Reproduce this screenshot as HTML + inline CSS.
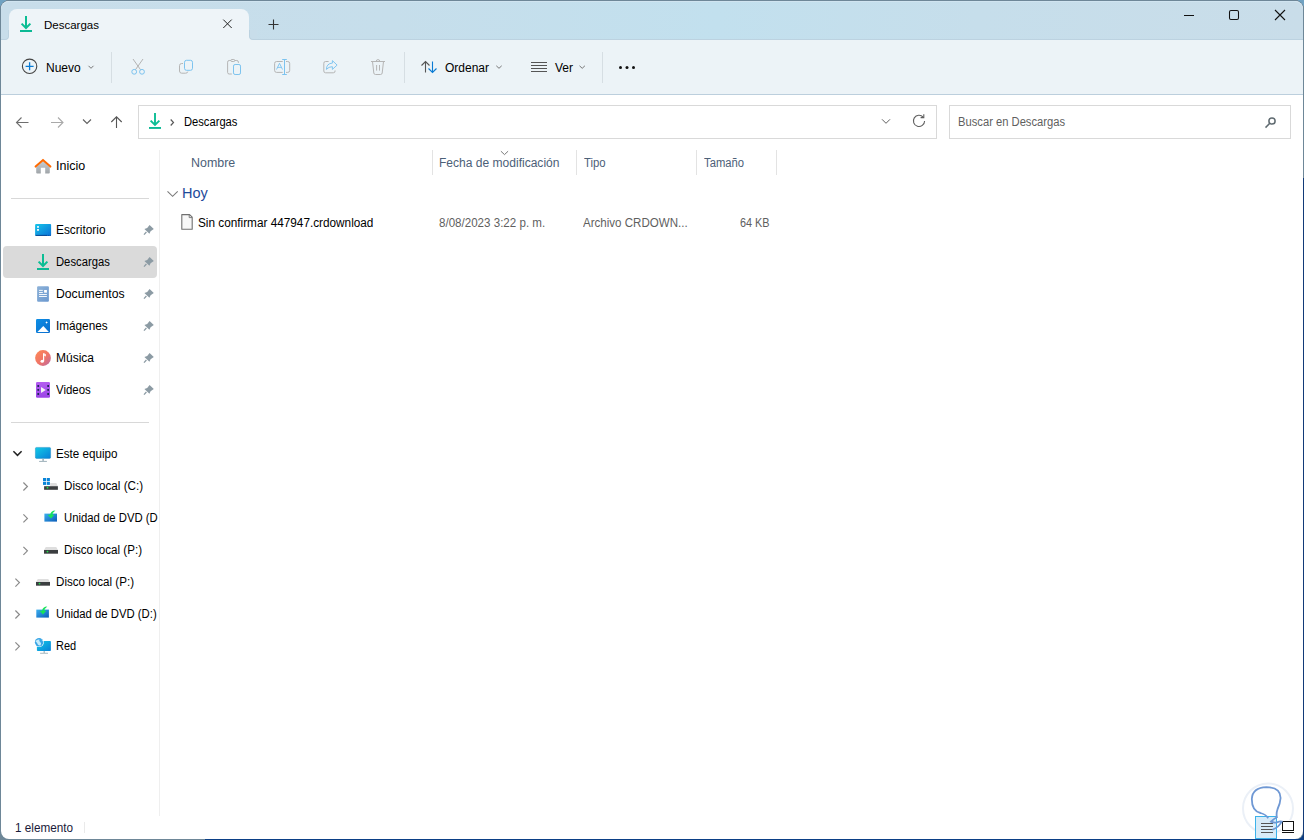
<!DOCTYPE html>
<html><head><meta charset="utf-8">
<style>
html,body{margin:0;padding:0;width:1304px;height:840px;overflow:hidden;background:#6E8798;}
body{position:relative;font-family:"Liberation Sans",sans-serif;color:#000;}
div{position:absolute;box-sizing:border-box;}
.edgeR{left:1303px;top:178px;width:1px;height:662px;background:#123a78;}
.edgeB{left:205px;top:839px;width:1099px;height:1px;background:#0b3f86;}
.win{left:1px;top:1px;width:1302px;height:838px;border-radius:8px;background:#fff;}
.tabbar{left:1px;top:1px;width:1302px;height:39px;background:linear-gradient(90deg,#c8ddea 0%,#c6deeb 30%,#c2e0ee 55%,#c6deeb 75%,#c9dde9 100%);border-radius:8px 8px 0 0;border-top:1px solid #d0e4f0;border-bottom:1px solid #bcd2e0;}
.tab{left:9px;top:9px;width:240px;height:31px;background:#eef4f8;border-radius:8px 8px 0 0;}
.notchL{left:1px;top:30px;width:8px;height:10px;background:#eef4f8;}
.notchL div{left:0;top:0;width:8px;height:10px;background:#c8ddea;border-radius:0 0 4px 0;border-right:1px solid #bcd2e0;border-bottom:1px solid #bcd2e0;}
.notchR{left:249px;top:30px;width:8px;height:10px;background:#eef4f8;}
.notchR div{left:0;top:0;width:8px;height:10px;background:#c8ddea;border-radius:0 0 0 4px;border-left:1px solid #bcd2e0;border-bottom:1px solid #bcd2e0;}
.cornerTL{left:0;top:0;width:6px;height:6px;background:#70a2c2;}
.cornerTR{left:1298px;top:0;width:6px;height:6px;background:#70a2c2;}
.cornerBR{left:1296px;top:832px;width:8px;height:8px;background:#0b3f86;}
.toolbar{left:1px;top:40px;width:1302px;height:54px;background:#ecf3f7;}
.tbline{left:1px;top:94px;width:1302px;height:1px;background:#bccfdd;}
.t{white-space:nowrap;font-size:12px;line-height:16px;}
.sep{width:1px;background:#d6dee3;}
.box{border:1px solid #d9d9d9;background:#fff;}
.navsel{left:3px;top:246px;width:154px;height:32px;background:#dadada;border-radius:4px;}
.hr{height:1px;background:#d8d8d8;}
.hdr{color:#4c6078;}
.n{font-size:12.5px;transform-origin:0 0;}
.gray{color:#5f5f5f;}
svg.ov{position:absolute;left:0;top:0;}
</style></head><body>
<div class="cornerTL"></div><div class="cornerTR"></div><div class="cornerBR"></div>
<div style="left:0;top:0;width:1304px;height:840px;border-radius:9px;background:#6E8798;"></div><div class="edgeR"></div><div class="edgeB"></div>
<div class="win"></div>
<div class="tabbar"></div>
<div class="tab"></div><div class="notchL"><div></div></div><div class="notchR"><div></div></div>
<div class="toolbar"></div>
<div class="tbline"></div>

<!-- tab text -->
<div class="t" style="left:44px;top:17px;font-size:11.5px;">Descargas</div>

<!-- toolbar text -->
<div class="t" style="left:46px;top:60px;">Nuevo</div>
<div class="sep" style="left:111px;top:52px;height:31px;"></div>
<div class="sep" style="left:404px;top:52px;height:31px;"></div>
<div class="t" style="left:445px;top:60px;">Ordenar</div>
<div class="t" style="left:555px;top:60px;">Ver</div>
<div class="sep" style="left:602px;top:52px;height:31px;"></div>

<!-- address -->
<div class="box" style="left:138px;top:105px;width:799px;height:34px;"></div>
<div class="t n" style="left:184px;top:114px;transform:scaleX(0.894);">Descargas</div>
<div class="box" style="left:949px;top:105px;width:342px;height:34px;"></div>
<div class="t n gray" style="left:958px;top:114px;transform:scaleX(0.896);">Buscar en Descargas</div>

<!-- nav pane -->
<div class="navsel"></div>
<div class="hr" style="left:11px;top:198px;width:138px;"></div>
<div class="hr" style="left:11px;top:422px;width:138px;"></div>
<div style="left:159px;top:150px;width:1px;height:666px;background:#efefef;"></div>
<div class="t n" style="left:56px;top:158px;transform:scaleX(1.0);">Inicio</div>
<div class="t n" style="left:56px;top:222px;transform:scaleX(0.95);">Escritorio</div>
<div class="t n" style="left:56px;top:254px;transform:scaleX(0.9);">Descargas</div>
<div class="t n" style="left:56px;top:286px;transform:scaleX(0.977);">Documentos</div>
<div class="t n" style="left:56px;top:318px;transform:scaleX(0.94);">Imágenes</div>
<div class="t n" style="left:56px;top:350px;transform:scaleX(0.96);">Música</div>
<div class="t n" style="left:56px;top:382px;transform:scaleX(0.915);">Videos</div>
<div class="t n" style="left:56px;top:446px;transform:scaleX(0.93);">Este equipo</div>
<div style="left:0;top:470px;width:158px;height:160px;overflow:hidden;">
<div class="t n" style="left:64px;top:8px;transform:scaleX(0.933);">Disco local (C:)</div>
<div class="t n" style="left:64px;top:40px;transform:scaleX(0.906);">Unidad de DVD (D:)</div>
<div class="t n" style="left:64px;top:72px;transform:scaleX(0.928);">Disco local (P:)</div>
<div class="t n" style="left:56px;top:104px;transform:scaleX(0.928);">Disco local (P:)</div>
<div class="t n" style="left:56px;top:136px;transform:scaleX(0.906);">Unidad de DVD (D:)</div>
</div>
<div class="t n" style="left:56px;top:638px;transform:scaleX(0.88);">Red</div>

<!-- headers -->
<div class="t n hdr" style="left:191px;top:155px;transform:scaleX(0.995);">Nombre</div>
<div class="sep" style="left:432px;top:150px;height:25px;background:#e3e3e3;"></div>
<div class="t n hdr" style="left:439px;top:155px;transform:scaleX(0.963);">Fecha de modificación</div>
<div class="sep" style="left:576px;top:150px;height:25px;background:#e3e3e3;"></div>
<div class="t n hdr" style="left:584px;top:155px;transform:scaleX(0.908);">Tipo</div>
<div class="sep" style="left:696px;top:150px;height:25px;background:#e3e3e3;"></div>
<div class="t n hdr" style="left:704px;top:155px;transform:scaleX(0.9);">Tamaño</div>
<div class="sep" style="left:776px;top:150px;height:25px;background:#e3e3e3;"></div>

<div class="t" style="left:182px;top:184px;font-size:14.5px;line-height:18px;color:#1e4a9a;">Hoy</div>
<div class="t n" style="left:198px;top:215px;transform:scaleX(0.942);">Sin confirmar 447947.crdownload</div>
<div class="t n gray" style="left:439px;top:215px;transform:scaleX(0.926);">8/08/2023 3:22 p. m.</div>
<div class="t n gray" style="left:583px;top:215px;transform:scaleX(0.925);">Archivo CRDOWN...</div>
<div class="t n gray" style="left:740px;top:215px;transform:scaleX(0.87);">64 KB</div>

<!-- status -->
<div class="t n" style="left:15px;top:820px;transform:scaleX(0.94);color:#1a1a3a;">1 elemento</div>
<div style="left:84px;top:822px;width:1px;height:11px;background:#eaeaea;"></div>

<svg class="ov" width="1304" height="840" viewBox="0 0 1304 840">
<defs>
<linearGradient id="teal" gradientUnits="userSpaceOnUse" x1="0" y1="0" x2="0" y2="1"><stop offset="0" stop-color="#0dbf93"/><stop offset="1" stop-color="#0dbf93"/></linearGradient>
</defs>
<!-- tab icon -->
<g fill="none" stroke="#0bbd94" stroke-width="2">
<path d="M26 16V28"/><path d="M21.6 23.6L26 28L30.4 23.6"/>
</g>
<rect x="20" y="30" width="12" height="2" fill="#0cb995"/>
<!-- tab close -->
<path d="M223.3 19.6L231.7 28M231.7 19.6L223.3 28" stroke="#222" stroke-width="1" fill="none"/>
<!-- new tab plus -->
<path d="M273.5 19.5V29.5M268.5 24.5H278.5" stroke="#333" stroke-width="1.1" fill="none"/>
<!-- window controls -->
<path d="M1184 15.5H1194" stroke="#111" stroke-width="1"/>
<rect x="1229.5" y="10.5" width="9" height="9" rx="1.5" fill="none" stroke="#111" stroke-width="1.05"/>
<path d="M1275 10L1285 20M1285 10L1275 20" stroke="#111" stroke-width="1.1"/>

<!-- TOOLBAR -->
<!-- nuevo circle plus -->
<circle cx="29.6" cy="66.3" r="7.2" fill="none" stroke="#444" stroke-width="1.1"/>
<path d="M29.6 62.3V70.3M25.6 66.3H33.6" stroke="#0a7bd4" stroke-width="1.3"/>
<path d="M88.5 65.8L91 68.3L93.5 65.8" fill="none" stroke="#777" stroke-width="1"/>
<!-- cut -->
<path d="M133 59L140.6 69.8M143 59L135.4 69.8" stroke="#b3b3b3" stroke-width="1" fill="none"/>
<circle cx="134.2" cy="71.8" r="2.4" fill="none" stroke="#7cc3ef" stroke-width="1"/>
<circle cx="142" cy="71.8" r="2.4" fill="none" stroke="#7cc3ef" stroke-width="1"/>
<!-- copy -->
<path d="M183 63.5H181.7Q179.5 63.5 179.5 65.7V71Q179.5 73.2 181.7 73.2H185.5Q187.6 73.2 187.8 71.6" fill="none" stroke="#b5b5b5" stroke-width="1"/>
<rect x="184.5" y="60.3" width="8" height="10" rx="2" fill="none" stroke="#7cc3ef" stroke-width="1"/>
<!-- paste -->
<path d="M231.8 74H229.2Q227.6 74 227.6 72.4V62.2Q227.6 60.5 229.2 60.5H236.8Q238.4 60.5 238.4 62.2V63" fill="none" stroke="#b5b5b5" stroke-width="1"/>
<rect x="230.8" y="59.5" width="4" height="2" rx="1" fill="#ecf3f7" stroke="#b5b5b5" stroke-width="1"/>
<rect x="233.5" y="64.5" width="7" height="10" rx="1.6" fill="none" stroke="#7cc3ef" stroke-width="1"/>
<!-- rename -->
<path d="M282.7 61.5H276.6Q274.6 61.5 274.6 63.5V70.4Q274.6 72.4 276.6 72.4H282.7M286 61.5H287.7Q289.7 61.5 289.7 63.5V70.4Q289.7 72.4 287.7 72.4H286" fill="none" stroke="#b5b5b5" stroke-width="1"/>
<path d="M276.5 69.5L279.5 63.3L282.5 69.5M277.5 67.4H281.5" fill="none" stroke="#7cc3ef" stroke-width="0.9"/>
<path d="M284.5 59.5V74.5M282.2 59.5H286.8M282.2 74.5H286.8" fill="none" stroke="#7cc3ef" stroke-width="1"/>
<!-- share -->
<path d="M328.6 61.5H325.6Q323.8 61.5 323.8 63.3V71Q323.8 72.8 325.6 72.8H333.3Q335.1 72.8 335.1 71V70.5" fill="none" stroke="#b5b5b5" stroke-width="1"/>
<path d="M326.4 69.4Q326.6 63.4 332.4 63.1V60.6L337.1 65.1L332.4 69.4V66.7Q328.8 66.6 326.4 69.4Z" fill="none" stroke="#7cc3ef" stroke-width="0.95" stroke-linejoin="round"/>
<!-- delete -->
<path d="M371 61.5H385M376.2 61.5Q376.2 59.6 378 59.6Q379.8 59.6 379.8 61.5M372.5 61.5L373.8 73Q374 74.5 375.5 74.5H380.5Q382 74.5 382.2 73L383.5 61.5M376.6 65V70.6M379.5 65V70.6" fill="none" stroke="#b5b5b5" stroke-width="1"/>
<!-- ordenar -->
<path d="M425.5 61.5V72.5M421.5 65.5L425.5 61.5L429.5 65.5" fill="none" stroke="#555" stroke-width="1.1"/>
<path d="M432.5 61.5V72.5M428.5 68.5L432.5 72.5L436.5 68.5" fill="none" stroke="#0a7bd4" stroke-width="1.1"/>
<path d="M496.3 65.8L499 68.3L501.7 65.8" fill="none" stroke="#777" stroke-width="1"/>
<!-- ver -->
<path d="M531 62.5H547M531 65.5H547M531 68.5H547M531 71.5H547" stroke="#555" stroke-width="1"/>
<path d="M579.5 65.8L582.2 68.3L584.9 65.8" fill="none" stroke="#777" stroke-width="1"/>
<!-- more -->
<circle cx="620.5" cy="67.5" r="1.5" fill="#111"/>
<circle cx="627" cy="67.5" r="1.5" fill="#111"/>
<circle cx="633.5" cy="67.5" r="1.5" fill="#111"/>

<!-- ADDRESS ROW -->
<path d="M28.5 122.5H16.5M21.5 117.5L16.5 122.5L21.5 127.5" fill="none" stroke="#6e6e6e" stroke-width="1.1"/>
<path d="M51 122.5H63M58 117.5L63 122.5L58 127.5" fill="none" stroke="#a9a9a9" stroke-width="1.1"/>
<path d="M83 119.5L87 123.5L91 119.5" fill="none" stroke="#606060" stroke-width="1.1"/>
<path d="M116.5 128V116.8M111.3 122L116.5 116.8L121.7 122" fill="none" stroke="#555" stroke-width="1.1"/>
<g fill="none" stroke="#0bbd94" stroke-width="1.9">
<path d="M155 113V125"/><path d="M150.6 120.6L155 125L159.4 120.6"/>
</g>
<rect x="149" y="127" width="12" height="1.9" fill="#0cb995"/>
<path d="M170.7 119.5L173.5 122.5L170.7 125.5" fill="none" stroke="#5a5a5a" stroke-width="1.2"/>
<path d="M882 119.3L886 123.3L890 119.3" fill="none" stroke="#606060" stroke-width="1"/>
<path d="M923.2 117.2A5.6 5.6 0 1 0 924.6 121" fill="none" stroke="#5f5f5f" stroke-width="1.1"/>
<path d="M920.6 117.6H923.8V114.2" fill="none" stroke="#5f5f5f" stroke-width="1.1"/>
<circle cx="1272" cy="121" r="3.1" fill="none" stroke="#5f6a70" stroke-width="1.5"/>
<path d="M1269.8 123.3L1265.5 127.6" stroke="#5f6a70" stroke-width="1.5"/>

<!-- NAV ICONS -->
<defs>
<linearGradient id="gHouse" x1="0" y1="0" x2="0" y2="1"><stop offset="0" stop-color="#c9ced2"/><stop offset="1" stop-color="#9fa4a8"/></linearGradient>
<linearGradient id="gDesk" x1="0" y1="0" x2="1" y2="1"><stop offset="0" stop-color="#17c6ea"/><stop offset="1" stop-color="#0a6fd6"/></linearGradient>
<linearGradient id="gDoc" x1="0" y1="0" x2="1" y2="1"><stop offset="0" stop-color="#8db2d8"/><stop offset="1" stop-color="#6b98cf"/></linearGradient>
<linearGradient id="gImg" x1="0" y1="0" x2="1" y2="1"><stop offset="0" stop-color="#0d8fe6"/><stop offset="1" stop-color="#0a6ccc"/></linearGradient>
<linearGradient id="gMus" x1="0" y1="0" x2="1" y2="1"><stop offset="0" stop-color="#ff8a55"/><stop offset="0.55" stop-color="#ef7468"/><stop offset="1" stop-color="#b86aa8"/></linearGradient>
<linearGradient id="gVid" x1="0" y1="0" x2="0" y2="1"><stop offset="0" stop-color="#b45df0"/><stop offset="1" stop-color="#9b45e6"/></linearGradient>
<linearGradient id="gMon" x1="0" y1="0" x2="1" y2="1"><stop offset="0" stop-color="#12cbe6"/><stop offset="1" stop-color="#0a80d8"/></linearGradient>
<linearGradient id="gDvd" x1="0" y1="0" x2="1" y2="1"><stop offset="0" stop-color="#3cb0f0"/><stop offset="1" stop-color="#0a5cb8"/></linearGradient>
<g id="pin"><path d="M149.6 225L153.8 229L150.6 231.2L149.4 233.8L144.4 229L147.2 228Z" fill="#8c9ba4"/><path d="M146.4 232L144 234.6" stroke="#8c9ba4" stroke-width="1.3"/></g>
<g id="drv"><path d="M1.8 0H12.2L14 3H0Z" fill="#dedede"/><rect x="0" y="3" width="14" height="4" fill="#3b3e40"/><rect x="0" y="6.2" width="14" height="0.8" fill="#8a8a8a"/><circle cx="3.5" cy="4.6" r="0.9" fill="#22e04a"/></g>
<g id="dvd"><rect x="0" y="3.2" width="12.6" height="8" fill="url(#gDvd)"/><path d="M11 0Q6.2 0.2 5.8 4.4H3.2L6.6 8.2L10 4.4H8Q8.4 1.8 11 0Z" fill="#16e35a"/></g>
<g id="chev"><path d="M0 0L4 4L0 8" fill="none" stroke="#8a8a8a" stroke-width="1.2"/></g>
</defs>
<!-- home -->
<path d="M36.2 167V172.6Q36.2 173.6 37.2 173.6H40.8V167.8H45.2V173.6H48.8Q49.8 173.6 49.8 172.6V167L43 160.8Z" fill="url(#gHouse)"/>
<path d="M35.6 166.6L43 160L50.4 166.6" fill="none" stroke="#ff6a00" stroke-width="2" stroke-linecap="round"/>
<!-- desktop -->
<rect x="35.1" y="224" width="16" height="12" rx="1" fill="url(#gDesk)"/>
<rect x="37" y="226.2" width="2" height="1.5" fill="#fff"/>
<rect x="37" y="229.1" width="2" height="1.6" fill="#fff"/>
<path d="M35.6 235.4H47.3M48.2 235.4H48.9M49.8 235.4H50.6" stroke="#0b3f8a" stroke-width="0.9"/>
<!-- download -->
<g fill="none" stroke="#0bbd94" stroke-width="2">
<path d="M43 254V266"/><path d="M38.6 261.6L43 266L47.4 261.6"/>
</g>
<rect x="37" y="268" width="12" height="2" fill="#0cb995"/>
<!-- documentos -->
<rect x="37.1" y="286.2" width="11.8" height="15.6" rx="1" fill="url(#gDoc)"/>
<path d="M39 290.4H42.8M39 292.5H42.8M39 294.5H46.9M39 296.5H46.9" stroke="#fff" stroke-width="0.9"/>
<rect x="44.1" y="290" width="2.8" height="2.7" fill="#fff"/>
<!-- imagenes -->
<rect x="36" y="319" width="14" height="14" rx="1.2" fill="url(#gImg)"/>
<path d="M37.4 332L43.3 326L48.9 332Z" fill="#fff"/>
<path d="M46.6 321.2L47.1 322L47.9 322.5L47.1 323L46.6 323.8L46.1 323L45.3 322.5L46.1 322Z" fill="#fff"/>
<!-- musica -->
<circle cx="43" cy="358" r="7.9" fill="url(#gMus)"/>
<path d="M43.6 353.2V361.2" stroke="#fff" stroke-width="1.2"/>
<path d="M44.2 353.2L45.8 354.2V356.5L44.2 355.8Z" fill="#fff"/>
<ellipse cx="42.2" cy="361.2" rx="1.7" ry="1.5" fill="#fff"/>
<!-- videos -->
<rect x="36" y="382" width="14" height="15.8" rx="1.2" fill="url(#gVid)"/>
<g fill="#1d2a55"><rect x="37.4" y="385" width="1.7" height="2"/><rect x="37.4" y="389" width="1.7" height="1.8"/><rect x="37.4" y="393" width="1.7" height="2"/><rect x="47.3" y="385" width="1.7" height="2"/><rect x="47.3" y="389" width="1.7" height="1.8"/><rect x="47.3" y="393" width="1.7" height="2"/></g>
<path d="M41 387L45.8 390L41 393Z" fill="#f4f4f4"/>
<!-- pins -->
<use href="#pin"/><use href="#pin" y="32"/><use href="#pin" y="64"/><use href="#pin" y="96"/><use href="#pin" y="128"/><use href="#pin" y="160"/>
<!-- este equipo -->
<path d="M13.4 451.3L17.5 455.4L21.6 451.3" fill="none" stroke="#222" stroke-width="1.5"/>
<rect x="35.4" y="447.4" width="15.2" height="11" rx="1.2" fill="url(#gMon)" stroke="#0b78b8" stroke-opacity="0.55" stroke-width="0.7"/>
<rect x="42.3" y="458.7" width="1.6" height="2.2" fill="#9fb2bb"/>
<rect x="39.1" y="460.9" width="7.8" height="1" fill="#9fb2bb"/>
<!-- drives -->
<use href="#chev" x="23.4" y="482.5"/>
<g fill="#0a84d8"><rect x="43" y="478" width="3.1" height="3.1"/><rect x="46.8" y="478" width="3.1" height="3.1"/><rect x="43" y="481.8" width="3.1" height="3.1"/><rect x="46.8" y="481.8" width="3.1" height="3.1"/></g>
<path d="M50.2 483H56.3L57.9 486.2H50.2Z" fill="#dedede"/>
<rect x="44.1" y="486.2" width="13.8" height="3.6" fill="#3b3e40"/>
<circle cx="47.5" cy="487.7" r="0.9" fill="#22e04a"/>
<use href="#chev" x="23.4" y="514.4"/>
<use href="#dvd" x="44.4" y="510.4"/>
<use href="#chev" x="23.4" y="546.8"/>
<use href="#drv" x="44" y="547"/>
<use href="#chev" x="15.4" y="578.6"/>
<use href="#drv" x="36" y="579"/>
<use href="#chev" x="15.4" y="610.5"/>
<use href="#dvd" x="36.3" y="606.4"/>
<use href="#chev" x="15.4" y="642.3"/>
<!-- red -->
<rect x="36.9" y="641" width="14" height="10" rx="0.8" fill="url(#gMon)"/>
<rect x="43.6" y="651" width="1.2" height="2" fill="#9fb2bb"/>
<rect x="40.1" y="652.8" width="7.9" height="0.9" fill="#9fb2bb"/>
<circle cx="39.1" cy="642.3" r="4.8" fill="#fff"/>
<circle cx="39.1" cy="642.3" r="4.2" fill="#3aa6e6"/>
<path d="M35.5 641.2Q37 639 39.5 639.6Q38.6 641.4 40.4 642.2Q41.6 643.2 40.6 645.4Q39 645.8 37.8 644.6Q37.6 643 35.5 641.2Z" fill="#c6ecfc"/>
<path d="M41.5 639.2Q43 640 43.2 641.4Q42 641.4 41.5 639.2Z" fill="#c6ecfc"/>

<!-- CONTENT -->
<path d="M500.9 151.2L504.5 154.6L508.1 151.2" fill="none" stroke="#7a7a7a" stroke-width="1"/>
<path d="M167.5 191.3L172.6 196.3L177.7 191.3" fill="none" stroke="#7a7a7a" stroke-width="1.1"/>
<path d="M181.8 214.6H189.6L192.2 217.2V229.2H181.8Z" fill="#f8f8f8" stroke="#707070" stroke-width="1.1" stroke-linejoin="round"/>
<path d="M189.2 214.8V217.6H192" fill="none" stroke="#707070" stroke-width="0.9"/>
<!-- status bar view buttons -->
<circle cx="1268" cy="808.5" r="25" fill="none" stroke="#ebf0f7" stroke-width="2"/>
<rect x="1255.5" y="816.5" width="21" height="22" fill="#d7ebf8" stroke="#3cb2ea" stroke-width="1"/>
<path d="M1261 823.5H1273M1261 826.5H1273M1261 829.5H1273M1261 832.5H1273" stroke="#555" stroke-width="1"/>
<rect x="1281" y="820" width="14" height="15" fill="#fff"/>
<rect x="1282.5" y="821.5" width="11" height="9" fill="none" stroke="#111" stroke-width="1"/>
<path d="M1282 832.5H1294" stroke="#111" stroke-width="1"/>
<!-- watermark -->
<path d="M1268.2 818.2Q1266 814.4 1260.5 813Q1251.8 811 1251.8 799Q1252.5 787.6 1266.5 787.2Q1280.5 787.3 1280.6 798Q1280.2 803.5 1277.6 809Q1276 813.5 1276.9 817.2Q1273.8 818.6 1271 821.6Q1273.6 823 1277 822.3Q1280 821 1281.8 821.5Q1279.6 826.5 1272.4 829.8" fill="none" stroke="#6f98d4" stroke-width="1.8"/>
</svg>
</body></html>
